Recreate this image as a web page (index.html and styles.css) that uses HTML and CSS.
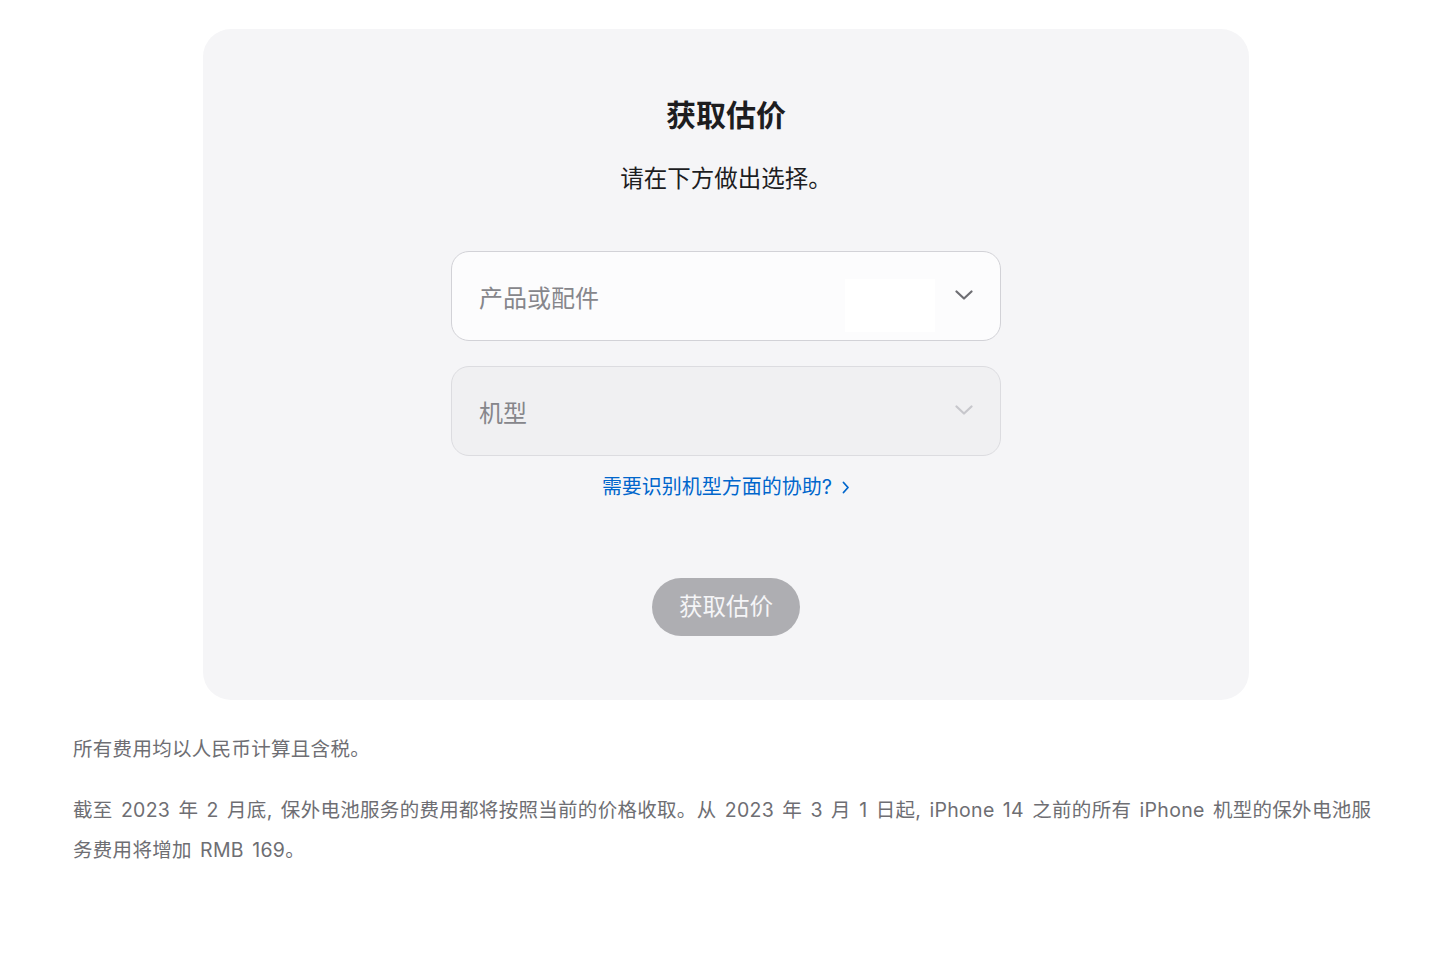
FILE: index.html
```html
<!DOCTYPE html>
<html lang="zh-CN">
<head>
  <meta charset="UTF-8">
  <meta name="viewport" content="width=device-width, initial-scale=1.0">
  <title>获取估价</title>
  <link rel="stylesheet" href="styles.css">
</head>
<body>
  <div class="page">
    <!-- 估价卡片 -->
    <div class="estimate-card">
      <h1>获取估价</h1>
      <p class="subtitle">请在下方做出选择。</p>

      <div class="field">
        <span class="field-label">产品或配件</span>
        <span class="field-blank"></span>
        <svg class="chevron" width="18" height="10" viewBox="0 0 18 10">
          <path d="M1.5 1.5 L9 8.5 L16.5 1.5" fill="none" stroke="#6e6e73" stroke-width="2.2" stroke-linecap="round" stroke-linejoin="round"/>
        </svg>
      </div>

      <div class="field disabled">
        <span class="field-label">机型</span>
        <svg class="chevron" width="18" height="10" viewBox="0 0 18 10">
          <path d="M1.5 1.5 L9 8.5 L16.5 1.5" fill="none" stroke="#c7c7cc" stroke-width="2.2" stroke-linecap="round" stroke-linejoin="round"/>
        </svg>
      </div>

      <a class="help-link" href="#">需要识别机型方面的协助?
        <svg width="8" height="13" viewBox="0 0 8 13">
          <path d="M1.5 1.5 L6 6.5 L1.5 11.5" fill="none" stroke="#0066cc" stroke-width="1.8" stroke-linecap="round" stroke-linejoin="round"/>
        </svg>
      </a>

      <button class="estimate-btn" disabled>获取估价</button>
    </div>

    <!-- 说明 -->
    <p class="note first">所有费用均以人民币计算且含税。</p>
    <p class="note">截至 2023 年 2 月底, 保外电池服务的费用都将按照当前的价格收取。从 2023 年 3 月 1 日起, iPhone 14 之前的所有 iPhone 机型的保外电池服务费用将增加 RMB 169。</p>
  </div>
</body>
</html>
```

FILE: styles.css
```css
body {
  margin: 0;
  background: #fff;
  font-family: Inter, "Noto Sans CJK SC", sans-serif;
  color: #1d1d1f;
}

.page {
  width: 1304px;
  margin: 0 auto;
  padding-top: 29px;
}

.estimate-card {
  width: 1046px;
  margin: 0 0 0 130px;
  box-sizing: border-box;
  padding: 68px 0 64px;
  background: #f5f5f7;
  border-radius: 28px;
  display: flex;
  flex-direction: column;
  align-items: center;
}

.estimate-card h1 {
  margin: 0;
  font-size: 30px;
  line-height: 36px;
  font-weight: bold;
  color: #1d1d1f;
}

.subtitle {
  margin: 30px 0 0;
  font-size: 23.5px;
  line-height: 32px;
  color: #1d1d1f;
}

.field {
  position: relative;
  width: 550px;
  height: 90px;
  box-sizing: border-box;
  margin-top: 56px;
  padding: 0 27px;
  display: flex;
  align-items: center;
  justify-content: space-between;
  background: #fcfcfd;
  border: 1px solid #d2d2d7;
  border-radius: 18px;
}

.field.disabled {
  margin-top: 25px;
  background: #f0f0f2;
  border-color: #dcdce0;
}

.field-label {
  font-size: 24px;
  color: #86868b;
}

.field-blank {
  position: absolute;
  left: 393px;
  top: 27px;
  width: 90px;
  height: 53px;
  background: #fff;
}

.chevron {
  margin-top: -2px;
}

.help-link {
  margin-top: 19px;
  font-size: 20px;
  line-height: 24px;
  color: #0066cc;
  text-decoration: none;
  display: flex;
  align-items: center;
  gap: 10px;
}

.estimate-btn {
  margin-top: 79px;
  width: 148px;
  height: 58px;
  padding: 0 0 5px;
  border: none;
  border-radius: 29px;
  background: #aeaeb2;
  color: #f5f5f7;
  font-family: inherit;
  font-size: 23.5px;
}

.note {
  margin: 21px 0 0;
  font-size: 19.5px;
  line-height: 40px;
  letter-spacing: 0.3px;
  word-spacing: 2.5px;
  color: #6e6e73;
}

.note.first {
  margin-top: 29px;
}
```
